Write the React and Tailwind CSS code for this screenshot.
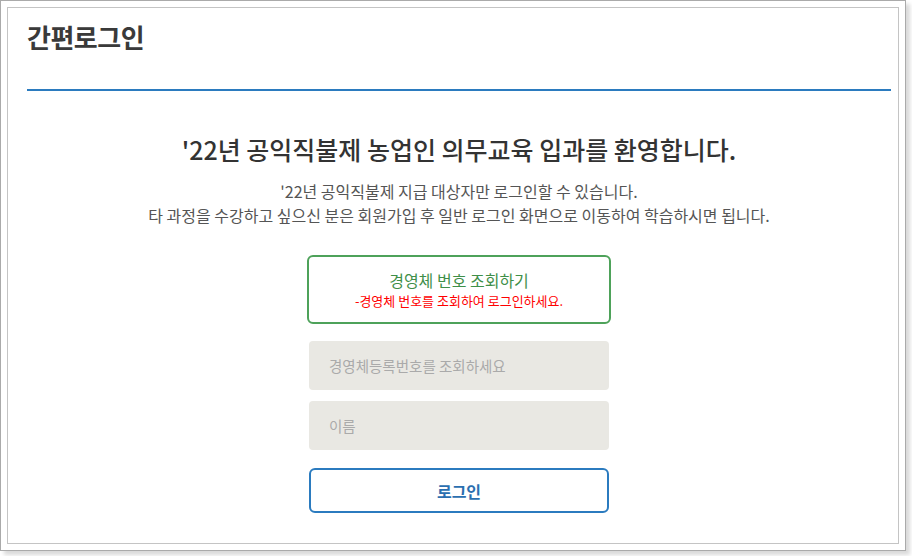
export default function App() {
  const font = { fontFamily: '"Noto Sans CJK KR", "Noto Sans", sans-serif' };
  return (
    <div className="w-[912px] h-[556px] bg-white" style={font}>
      <div className="w-[906px] h-[551px] border border-[#aaaaaa] bg-white p-[6px] shadow-[4px_4px_4px_rgba(0,0,0,0.15)]">
        <div className="h-full border border-[#c4c4c4] pl-[19px] pr-[7px]">
          {/* Header */}
          <div className="h-[83px] border-b-2 border-[#2b7bbf] pt-[9px]">
            <h1 className="text-[26px] font-bold text-[#3a3a3a] tracking-[-0.5px] leading-[40px]">간편로그인</h1>
          </div>

          <div className="flex flex-col items-center">
            <h2 className="mt-[40px] text-[25px] font-medium text-[#333] leading-[36px]">
              '22년 공익직불제 농업인 의무교육 입과를 환영합니다.
            </h2>
            <p className="mt-[12px] text-[16px] text-[#555] text-center leading-[24px]">
              '22년 공익직불제 지급 대상자만 로그인할 수 있습니다.
              <br />
              타 과정을 수강하고 싶으신 분은 회원가입 후 일반 로그인 화면으로 이동하여 학습하시면 됩니다.
            </p>

            <button className="mt-[28px] w-[304px] h-[69px] border-2 border-[#4ea25a] rounded-[6px] flex flex-col items-center justify-center">
              <span className="text-[16px] text-[#3f8f49] leading-[22px]">경영체 번호 조회하기</span>
              <span className="text-[13px] text-[#ff0000] leading-[19px]">-경영체 번호를 조회하여 로그인하세요.</span>
            </button>

            <div className="mt-[17px] flex flex-col gap-[11px]">
              <input
                className="w-[300px] h-[49px] bg-[#e9e8e3] rounded-[4px] pl-[20px] text-[14.5px] text-[#333] placeholder:text-[#aaa] outline-none"
                placeholder="경영체등록번호를 조회하세요"
                style={font}
              />
              <input
                className="w-[300px] h-[49px] bg-[#e9e8e3] rounded-[4px] pl-[20px] text-[14.5px] text-[#333] placeholder:text-[#aaa] outline-none"
                placeholder="이름"
                style={font}
              />
            </div>

            <button className="mt-[18px] w-[300px] h-[45px] border-2 border-[#2b7bbf] rounded-[6px] text-[16px] font-bold text-[#2b6fb0]">
              로그인
            </button>
          </div>
        </div>
      </div>
    </div>
  );
}
